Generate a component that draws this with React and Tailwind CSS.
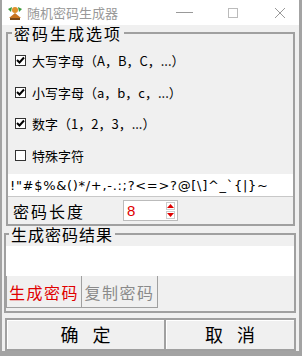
import React from "react";

const CJK = { fontFamily: '"Noto Sans CJK SC", "Microsoft YaHei", sans-serif' };

const Check = ({ checked }) => (
  <div className="w-[11px] h-[11px] border border-[#333] bg-white flex items-center justify-center shrink-0">
    {checked && (
      <svg width="9" height="9" viewBox="0 0 9 9">
        <path d="M1 4 L3.5 6.5 L8 1.5" fill="none" stroke="#000" strokeWidth="2" />
      </svg>
    )}
  </div>
);

const options = [
  { label: "大写字母（A，B，C，...）", checked: true },
  { label: "小写字母（a，b，c，...）", checked: true },
  { label: "数字（1，2，3，...）", checked: true },
  { label: "特殊字符", checked: false },
];

const AppIcon = () => (
  <svg width="18" height="18" viewBox="0 0 18 18">
    <path d="M3 14 L9 9 L15 14 Z" fill="#c8741e" />
    <circle cx="9" cy="6" r="3" fill="#e0902a" />
    <path d="M2 5 L6 3 L5 8 Z" fill="#3b9a3b" />
    <path d="M12 3 L16 5 L13 8 Z" fill="#3b9a3b" />
    <rect x="4" y="14" width="10" height="2" fill="#7a4a18" />
  </svg>
);

export default function App() {
  return (
    <div
      className="w-[302px] h-[356px] bg-[#f0f0f0] flex flex-col border-l-2 border-r-[3px] border-b-[5px] border-[#a3a3a3] overflow-hidden"
      style={CJK}
    >
      {/* Title bar */}
      <div className="h-[25px] bg-white flex items-center shrink-0">
        <div className="ml-[3px] w-[20px] flex justify-center">
          <AppIcon />
        </div>
        <span className="ml-[2px] text-[13px] text-[#999] leading-none">随机密码生成器</span>
        <div className="ml-auto flex items-center">
          <span className="w-[17px] h-px bg-[#999] mr-[35px]" />
          <span className="w-[10px] h-[10px] border border-[#bbb] mr-[36px]" />
          <svg width="12" height="12" viewBox="0 0 12 12" className="mr-[13px]">
            <path d="M1 1 L11 11 M11 1 L1 11" stroke="#999" strokeWidth="1" />
          </svg>
        </div>
      </div>

      {/* Options group */}
      <fieldset className="ml-[4px] w-[289px] border-2 border-[#a0a0a0] p-0 m-0 shrink-0">
        <legend className="ml-[4px] px-[2px] text-[16px] leading-[16px] text-black tracking-[2px]">
          密码生成选项
        </legend>
        <div className="pt-[4px] flex flex-col">
          {options.map((o) => (
            <div key={o.label} className="h-[31.5px] flex items-center pl-[7px] gap-[6px]">
              <Check checked={o.checked} />
              <span className="text-[13px] leading-none text-black">{o.label}</span>
            </div>
          ))}
        </div>
        <div className="mt-[3px] h-[23px] bg-white border-b border-[#c8c8c8] flex items-center pl-[2px]">
          <span
            className="text-[13px] leading-none text-black tracking-[0.7px] whitespace-nowrap"
            style={{ fontFamily: '"DejaVu Sans", sans-serif' }}
          >
            {'!"#$%&()*/+,-.:;?<=>?@[\\]^_`{|}~'}
          </span>
        </div>
        <div className="h-[27px] flex items-center pl-[5px]">
          <span className="w-[110px] text-[16px] leading-none tracking-[2px] text-black">密码长度</span>
          <div className="w-[55px] h-[21px] bg-white border border-[#bbb] flex items-center">
            <span
              className="ml-[3px] text-[15px] leading-none text-[#e00000]"
              style={{ fontFamily: '"Liberation Sans", sans-serif' }}
            >
              8
            </span>
            <div className="ml-auto mr-[2px] flex flex-col gap-px">
              <div className="w-[9px] h-[8px] bg-white border border-[#ccc] flex items-center justify-center">
                <svg width="7" height="4" viewBox="0 0 7 4"><path d="M0 4 L3.5 0 L7 4 Z" fill="#e00000" /></svg>
              </div>
              <div className="w-[9px] h-[8px] bg-white border border-[#ccc] flex items-center justify-center">
                <svg width="7" height="4" viewBox="0 0 7 4"><path d="M0 0 L3.5 4 L7 0 Z" fill="#e00000" /></svg>
              </div>
            </div>
          </div>
        </div>
      </fieldset>

      {/* Result group */}
      <fieldset className="ml-[2px] w-[292px] border-2 border-[#a0a0a0] p-0 m-0 shrink-0">
        <legend className="ml-[3px] px-[2px] text-[16px] leading-[16px] text-black tracking-[1px]">
          生成密码结果
        </legend>
        <div className="mt-[4px] h-[30px] bg-white" />
        <div className="flex h-[32px]">
          <button className="w-[76px] h-full border border-[#a0a0a0] border-t-0 bg-[#f0f0f0] text-[16px] tracking-[1.5px] text-[#e00000]">
            生成密码
          </button>
          <button className="w-[76px] h-full border border-l-0 border-[#a0a0a0] border-t-0 bg-[#f0f0f0] text-[16px] tracking-[1.5px] text-[#8a8a8a]">
            复制密码
          </button>
        </div>
        <div className="h-[3px]" />
      </fieldset>

      {/* Bottom buttons */}
      <div className="mt-[5px] ml-[3px] w-[291px] flex h-[33px]">
        <button className="w-[161px] h-full border-2 border-[#a0a0a0] bg-[#f0f0f0] shadow-[inset_1px_1px_0_#fff] text-[18px] text-black flex items-center justify-center gap-[14px]">
          <span>确</span>
          <span>定</span>
        </button>
        <button className="flex-1 h-full border-2 border-l-0 border-[#a0a0a0] bg-[#f0f0f0] shadow-[inset_1px_1px_0_#fff] text-[18px] text-black flex items-center justify-center gap-[14px]">
          <span>取</span>
          <span>消</span>
        </button>
      </div>
    </div>
  );
}
